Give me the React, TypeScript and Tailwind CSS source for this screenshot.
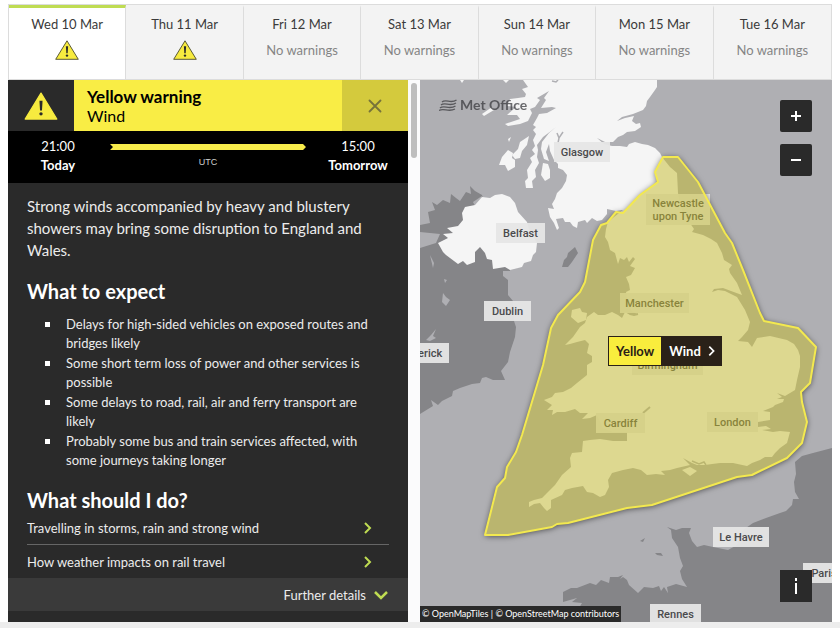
import { useState } from "react";
import { HiOutlineX } from "react-icons/hi";

interface Day {
  label: string;
  warning: boolean;
}

interface Place {
  name: string[];
  x: number;
  y: number;
  w: number;
  h: number;
}

const days: Day[] = [
  { label: "Wed 10 Mar", warning: true },
  { label: "Thu 11 Mar", warning: true },
  { label: "Fri 12 Mar", warning: false },
  { label: "Sat 13 Mar", warning: false },
  { label: "Sun 14 Mar", warning: false },
  { label: "Mon 15 Mar", warning: false },
  { label: "Tue 16 Mar", warning: false },
];

const impacts = [
  "Delays for high-sided vehicles on exposed routes and bridges likely",
  "Some short term loss of power and other services is possible",
  "Some delays to road, rail, air and ferry transport are likely",
  "Probably some bus and train services affected, with some journeys taking longer",
];

const advice = ["Travelling in storms, rain and strong wind", "How weather impacts on rail travel"];

const places: Place[] = [
  { name: ["Glasgow"], x: 554, y: 142, w: 56, h: 20 },
  { name: ["Belfast"], x: 496, y: 223, w: 49, h: 20 },
  { name: ["Dublin"], x: 484, y: 301, w: 47, h: 20 },
  { name: ["Limerick"], x: 393, y: 343, w: 56, h: 20 },
  { name: ["Newcastle", "upon Tyne"], x: 646, y: 194, w: 64, h: 31 },
  { name: ["Manchester"], x: 620, y: 293, w: 69, h: 20 },
  { name: ["Birmingham"], x: 632, y: 355, w: 71, h: 20 },
  { name: ["Cardiff"], x: 596, y: 413, w: 49, h: 20 },
  { name: ["London"], x: 707, y: 412, w: 51, h: 20 },
  { name: ["Le Havre"], x: 713, y: 527, w: 56, h: 20 },
  { name: ["Paris"], x: 803, y: 563, w: 42, h: 20 },
  { name: ["Rennes"], x: 650, y: 604, w: 51, h: 20 },
];

// Coastlines share the coordinate space of the map's viewBox
const britain =
  "M523 80 528 87 522 89 526 94 525 97 518 98 510 99 507 106 516 107 507 115 517 115 520 119 505 124 508 126 520 124 528 121 532 113 530 109 535 107 540 100 537 98 549 91 544 98 546 100 541 108 552 107 556 108 547 113 539 114 537 118 533 125 536 127 533 130 536 134 533 140 535 146 532 150 535 154 530 158 532 162 527 170 528 178 525 181 526 188 533 188 532 181 536 177 535 170 539 163 537 157 538 150 537 145 543 137 551 131 556 127 549 133 542 142 541 149 544 159 549 161 546 152 549 144 550 151 554 160 558 164 558 168 563 170 567 175 566 181 562 188 557 193 555 199 552 204 554 209 548 208 550 217 554 223 557 230 559 228 556 219 563 218 565 222 570 222 573 226 577 228 578 222 585 220 587 223 592 218 597 221 602 220 607 214 607 209 616 211 623 210 614 217 608 222 606 229 605 237 608 242 610 250 615 253 618 264 620 258 624 260 627 257 629 262 633 257 635 259 630 266 635 268 631 275 626 277 629 284 630 290 626 292 628 303 632 311 637 314 630 315 625 312 622 318 618 315 612 312 605 315 598 315 594 312 587 317 585 323 580 327 573 337 565 345 570 344 577 342 585 340 589 344 587 353 592 356 592 362 587 365 587 375 577 383 571 388 563 392 555 393 552 397 544 400 552 405 547 410 553 410 552 415 557 412 565 412 575 409 580 413 588 413 582 419 590 418 597 415 603 428 613 432 627 432 627 441 613 441 600 439 590 440 583 441 582 452 572 453 570 458 571 467 562 475 555 485 547 493 542 498 534 500 529 502 529 507 534 504 540 503 544 508 547 511 551 508 551 500 562 495 565 490 572 488 583 486 587 492 593 493 600 497 605 495 609 487 608 480 612 473 623 470 633 468 641 470 647 475 656 474 665 475 661 471 670 470 677 468 690 465 683 458 692 463 697 465 705 465 712 464 720 463 733 463 747 466 752 463 760 460 765 457 772 457 775 453 780 448 787 443 790 432 780 431 773 432 762 430 771 429 766 426 758 427 758 422 770 420 770 412 763 411 773 407 775 405 783 402 784 399 777 399 782 397 777 393 785 396 790 393 795 390 797 380 800 367 800 356 798 350 794 344 787 340 770 336 757 338 752 347 748 342 738 341 742 337 748 330 750 322 745 310 737 297 725 291 718 290 712 292 714 289 723 288 731 291 742 295 737 283 730 273 729 269 732 265 724 260 722 253 717 243 711 239 703 235 692 232 694 229 683 213 680 205 678 193 677 173 670 167 662 157 660 153 655 148 648 145 642 144 635 142 629 144 627 147 620 146 612 146 604 144 597 138 605 142 613 142 618 137 623 135 627 132 635 131 641 127 640 123 636 124 632 121 634 116 625 118 617 121 622 117 633 114 643 110 646 106 647 101 650 97 655 90 657 87 657 80Z";

const britishIslands = [
  "M543 163 548 164 550 170 550 178 545 181 541 175Z",
  "M529 136 527 145 522 151 520 158 515 159 512 155 518 149 520 142Z",
  "M508 150 513 153 512 158 515 160 515 167 508 171 505 165 499 165 502 157Z",
  "M572 310 580 308 582 312 587 313 586 320 578 323 571 317Z",
  "M682 470 690 467 697 471 690 476Z",
  "M482 114 492 107 494 110 484 116Z",
  "M460 80 464 80 462 83Z",
  "M503 80 509 80 506 83Z",
  "M508 139 511 137 509 142Z",
];

const northernIreland =
  "M482 197 490 198 495 195 502 194 510 197 515 203 518 212 527 222 529 229 537 243 536 252 533 255 531 261 524 263 522 267 510 270 505 267 493 269 492 260 487 259 485 253 480 247 475 252 475 262 467 265 463 261 458 264 450 258 446 255 443 252 438 243 448 238 443 234 453 233 447 228 458 226 463 220 462 213 465 207 475 205Z";

const ireland =
  "M420 225 430 223 428 212 435 210 432 202 437 205 443 200 450 203 451 194 456 198 460 201 466 192 471 194 470 186 475 191 482 195 484 202 510 268 510 271 503 271 503 276 508 280 508 295 513 301 514 321 516 327 515 337 510 352 508 362 501 371 505 380 493 380 486 377 482 378 480 383 472 384 460 388 453 391 452 396 442 401 438 405 431 400 433 406 420 414 420 248 436 243 440 234 420 232Z";

const france =
  "M832 448 813 453 802 456 795 462 796 474 794 482 795 492 799 499 793 499 792 505 786 511 780 513 766 518 753 523 743 530 737 545 728 550 713 547 704 545 697 547 692 541 689 533 691 528 682 528 676 530 667 527 671 530 672 538 678 547 680 558 683 566 680 571 682 579 687 587 676 584 667 587 668 593 664 587 661 591 659 586 653 588 644 587 638 593 629 585 627 580 623 577 620 579 623 575 618 577 610 577 609 583 601 580 596 585 590 583 577 588 571 588 563 592 563 602 570 600 577 598 572 602 582 603 579 608 584 613 600 624 832 624Z";

const warningArea =
  "485,535 497,487 505,478 507,467 516,452 522,435 543,365 551,328 558,315 580,292 585,282 593,240 601,225 607,223 616,212 623,213 640,195 658,182 655,172 663,157 678,157 698,182 725,233 732,243 743,270 760,313 764,321 798,328 816,347 810,383 801,392 802,402 807,422 802,443 787,458 758,472 752,475 737,477 652,505 627,508 568,523 557,524 552,527 508,535";

function WarningIcon({ className, stroke }: { className: string; stroke: string }) {
  return (
    <svg viewBox="0 0 24 20" className={className} aria-hidden="true">
      <path d="M12 0.8 23.3 19.3H0.7Z" fill="#f7eb3f" stroke={stroke} strokeWidth="0.9" strokeLinejoin="round" />
      <path d="M10.9 6.2h2.2l-.4 7h-1.4z" fill="#2a2a2a" />
      <circle cx="12" cy="15.6" r="1.2" fill="#2a2a2a" />
    </svg>
  );
}

function Chevron({ className, d }: { className: string; d: string }) {
  return (
    <svg viewBox="0 0 14 14" className={className} fill="none" stroke="currentColor" aria-hidden="true">
      <path d={d} />
    </svg>
  );
}

function WarningMap() {
  return (
    <section aria-label="Warnings map" className="relative min-w-0 flex-[103] overflow-hidden bg-[#afafb3]">
      <svg viewBox="420 80 412 542" preserveAspectRatio="xMinYMin slice" className="absolute inset-0 h-full w-full">
        <defs>
          <filter id="area-shadow" x="-10%" y="-10%" width="120%" height="120%">
            <feDropShadow dx="0" dy="1" stdDeviation="3" floodColor="#000" floodOpacity="0.65" />
          </filter>
          <clipPath id="outside-area">
            <path clipRule="evenodd" d={`M400 60H860V640H400ZM${warningArea}Z`} />
          </clipPath>
        </defs>
        <rect x="420" y="80" width="412" height="542" fill="#afafb3" />
        <g fill="#858588">
          <path d={ireland} />
          <path d={france} />
          <path d="M575 247 578 253 572 262 568 267 562 267 564 260 567 257 568 253Z" />
          <path d="M640 541 645 538 643 542Z" />
          <path d="M655 553 661 553 663 556 657 555Z" />
        </g>
        <g fill="#afafb3">
          <path d="M443 293 446 297 450 300 446 306 442 302Z" />
          <path d="M436 329 433 336 436 338 430 341 426 340 431 335Z" />
          <path d="M430 255 434 263 433 268Z" />
          <path d="M473 202 482 196 481 203 475 206Z" />
          <path d="M444 279 447 280 445 283Z" />
        </g>
        <g fill="#f5f5f5">
          <path d={britain} />
          <path d={northernIreland} />
          {britishIslands.map((d) => (
            <path key={d} d={d} />
          ))}
        </g>
        <path d="M643 413 650 407" stroke="#afafb3" strokeWidth="2" />
        <path d="M692 461l7 3 5-2 2 3" stroke="#afafb3" strokeWidth="1.5" fill="none" />
        <path d="M557 133l2 5 4-6M559 138l-1 5" stroke="#afafb3" strokeWidth="1.5" fill="none" />
        <path d="M552 81l4 1 2-2" stroke="#afafb3" strokeWidth="1.5" fill="none" />
        <path d="M630 314l4 1 4-1" stroke="#afafb3" strokeWidth="2" fill="none" />

        {places.map((p) => (
          <g key={p.name[0]}>
            <rect x={p.x} y={p.y} width={p.w} height={p.h} fill="#e6e6e6" fillOpacity="0.95" />
            <text
              textAnchor="middle"
              fill="#4a4a4c"
              className="font-[Roboto,sans-serif] text-[11px] font-medium"
            >
              {p.name.map((line, i) => (
                <tspan key={line} x={p.x + p.w / 2} y={p.y + (p.name.length > 1 ? 13 : 14) + i * 13}>
                  {line}
                </tspan>
              ))}
            </text>
          </g>
        ))}

        {/* The fill is see-through, so its shadow is kept to the outside */}
        <g clipPath="url(#outside-area)">
          <polygon points={warningArea} fill="#77752f" filter="url(#area-shadow)" />
        </g>
        <polygon points={warningArea} fill="#c6bc2b" fillOpacity="0.5" stroke="#f3e94f" strokeWidth="2" strokeLinejoin="round" />
      </svg>

      {/* LOGO */}
      <div className="absolute top-[15px] left-[19px] flex items-center gap-[3px] text-[#3c3c40] opacity-75">
        <svg viewBox="0 0 18 12" className="h-3 w-[18px]" fill="none" stroke="currentColor" strokeWidth="1.4" aria-hidden="true">
          <path d="M3 3C7-.5 11.500 5 17.500 1" />
          <path d="M2 6C6 2.500 10.500 8 17 4" />
          <path d="M1 9C5 5.500 10 11 16.500 7" />
          <path d="M0 11.500C4.500 8.500 9.500 13.500 16 10" />
        </svg>
        <span className="font-[Lato,sans-serif] text-[14px] leading-5 font-bold">Met Office</span>
      </div>

      {/* ZOOM */}
      <div className="absolute top-5 right-5 flex flex-col gap-3 text-white">
        <button aria-label="Zoom in" className="flex size-8 items-center justify-center rounded-xs bg-[#2a2a2a]">
          <svg viewBox="0 0 10 10" className="size-[10px]" stroke="currentColor" strokeWidth="2" aria-hidden="true">
            <path d="M5 0v10M0 5h10" />
          </svg>
        </button>
        <button aria-label="Zoom out" className="flex size-8 items-center justify-center rounded-xs bg-[#2a2a2a]">
          <svg viewBox="0 0 10 10" className="size-[10px]" stroke="currentColor" strokeWidth="2" aria-hidden="true">
            <path d="M0 5h10" />
          </svg>
        </button>
      </div>

      <button className="absolute top-64 left-[188px] flex h-[30px] items-stretch border border-[#2a2118] text-[13px] leading-7 font-bold">
        <span className="bg-[#f9ed3d] px-[7px] text-[#2a2118]">Yellow</span>
        <span className="flex items-center gap-1 bg-[#2a2118] pr-1 pl-2 text-white">
          Wind
          <Chevron className="size-3 stroke-2" d="M5 2l5 5-5 5" />
        </span>
      </button>

      <button aria-label="Map information" className="absolute right-5 bottom-5 flex size-8 items-center justify-center bg-[#2a2a2a] text-white">
        <svg viewBox="0 0 4 16" className="h-4 w-1" fill="currentColor" aria-hidden="true">
          <path d="M1 0h2v3H1zM1 5h2v11H1z" />
        </svg>
      </button>

      <p className="absolute bottom-0 left-0 bg-[#2a2a2a] px-[2px] text-[9px] leading-4 text-white">
        <a href="#tiles">© OpenMapTiles</a> | <a href="#osm">© OpenStreetMap contributors</a>
      </p>
    </section>
  );
}

export default function App() {
  const [activeDay, setActiveDay] = useState(0);

  return (
    <div className="flex min-h-screen flex-col bg-white pt-1 font-[Lato,sans-serif]">
      {/* DAYS */}
      <div role="tablist" className="mx-2 grid h-[76px] grid-cols-7 border border-[#dcdcdc] bg-[#f3f3f3]">
        {days.map((day, i) => (
          <button
            key={day.label}
            role="tab"
            aria-selected={i === activeDay}
            onClick={() => setActiveDay(i)}
            className={`flex flex-col items-center gap-[6px] border-t-3 border-r pt-[6px] text-[13px] leading-5 ${
              i === activeDay ? "border-t-[#bfdc52] border-r-[#dcdcdc] bg-white" : "border-t-transparent border-r-[#dcdcdc]"
            } last:border-r-0`}
          >
            <span className="text-[#3a3a3a]">{day.label}</span>
            {day.warning ? (
              <WarningIcon className="h-5 w-6" stroke="#4a4a2a" />
            ) : (
              <span className="text-[#858585]">No warnings</span>
            )}
          </button>
        ))}
      </div>

      <div className="mx-2 flex flex-1">
        <section aria-label="Warning details" className="flex min-w-0 flex-[100] flex-col bg-[#2a2a2a] text-white">
          <header className="flex h-[51px] items-stretch">
            <div className="flex w-[66px] items-center justify-center">
              <WarningIcon className="h-7 w-[34px]" stroke="#f7eb3f" />
            </div>
            <div className="flex flex-1 flex-col justify-center bg-[#f9ed45] pl-[13px] text-[16px] leading-[19px] text-black">
              <h1 className="text-[17px] leading-[19px] font-bold">Yellow warning</h1>
              <p>Wind</p>
            </div>
            <button aria-label="Close" className="flex w-[66px] items-center justify-center bg-[#d4ca3d] text-[#77733a]">
              <HiOutlineX className="size-[22px]" />
            </button>
          </header>

          <div className="grid h-[52px] grid-cols-[1fr_2fr_1fr] bg-black pt-[6px] text-center text-[13px] leading-[19px]">
            <div>
              <p>21:00</p>
              <p className="font-bold">Today</p>
            </div>
            <div className="flex flex-col items-center gap-1 pt-[7px]">
              <svg viewBox="0 0 196 6" preserveAspectRatio="none" className="h-[6px] w-[196px]" aria-hidden="true">
                <path d="M0 0H193L196 3 193 6H0L3 3Z" fill="#f7eb4b" />
              </svg>
              <p className="font-['Liberation_Sans',sans-serif] text-[9px] leading-4 text-[#d0d0d0]">UTC</p>
            </div>
            <div>
              <p>15:00</p>
              <p className="font-bold">Tomorrow</p>
            </div>
          </div>

          <div className="px-[19px] pt-3">
            <p className="text-[15px] leading-[22px] text-[#ececec]">
              Strong winds accompanied by heavy and blustery showers may bring some disruption to England and Wales.
            </p>

            <h2 className="mt-[18px] mb-3 text-[20px] leading-6 font-bold">What to expect</h2>
            <ul className="space-y-px pr-3 pl-[18px] text-[13px] leading-[19px] text-[#ececec]">
              {impacts.map((impact) => (
                <li key={impact} className="flex items-start gap-4">
                  <span className="mt-[7px] size-[5px] shrink-0 bg-white" />
                  {impact}
                </li>
              ))}
            </ul>

            <h2 className="mt-[18px] text-[20px] leading-6 font-bold">What should I do?</h2>
            <div className="divide-y divide-[#666666] text-[13px] leading-5 text-[#ececec]">
              {advice.map((item) => (
                <a key={item} href="#advice" className="flex h-[33px] items-center justify-between pr-[14px]">
                  {item}
                  <Chevron className="size-[14px] stroke-2 text-[#bfdc52]" d="M4 2l5 5-5 5" />
                </a>
              ))}
            </div>
          </div>

          <button className="mb-[11px] flex h-[33px] items-center justify-end gap-2 bg-[#3a3a3a] pr-5 text-[13px] leading-5 text-[#ececec]">
            Further details
            <Chevron className="size-[14px] stroke-[2.5] text-[#bfdc52]" d="M1 4l6 6 6-6" />
          </button>
        </section>

        <div className="w-3 bg-[#fbfbfc] px-[3px] pt-[3px]">
          <div className="h-[75px] rounded-full bg-[#bebebe]" />
        </div>

        <WarningMap />
      </div>

      <div className="h-[6px] bg-[#ededed]" />
    </div>
  );
}
